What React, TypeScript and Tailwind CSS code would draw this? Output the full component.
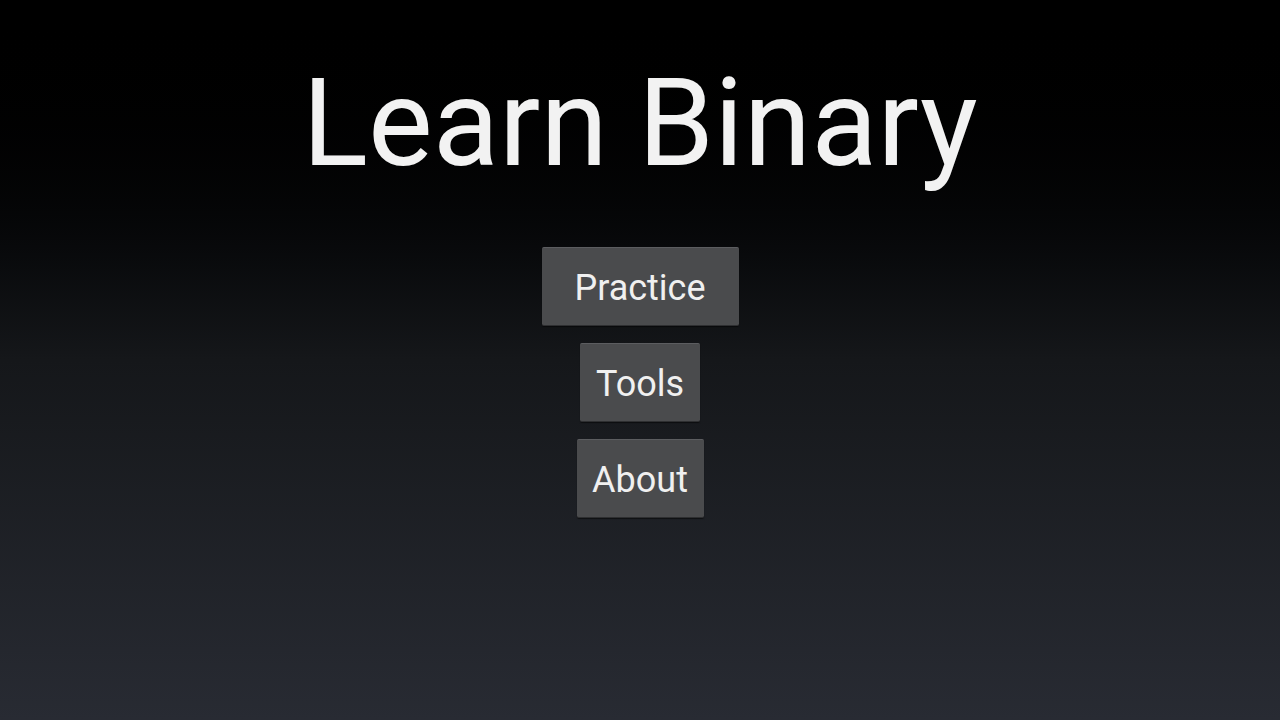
const MenuButton = ({ label, width }: { label: string; width: string }) => (
  <button
    className={`${width} h-[79px] pt-[3px] bg-[#4a4b4d] rounded-[2px] border-t border-t-[#5c5d60] border-b border-b-[#2e2f31] text-[36px] leading-none text-[#f0f0f0] shadow-[0_1px_1px_rgba(0,0,0,0.5)]`}
  >
    {label}
  </button>
);

export default function App() {
  return (
    <div
      className="w-full h-[720px] bg-gradient-to-b from-[#000000] via-[#15171a] to-[#282b33] flex flex-col items-center"
      style={{ fontFamily: 'Roboto, "Noto Sans", sans-serif' }}
    >
      <h1 className="mt-[49px] text-[122px] leading-[150px] text-[#f2f2f2] font-normal">
        Learn Binary
      </h1>
      <div className="mt-[48px] flex flex-col items-center gap-[17px]">
        <MenuButton label="Practice" width="w-[197px]" />
        <MenuButton label="Tools" width="w-[120px]" />
        <MenuButton label="About" width="w-[127px]" />
      </div>
    </div>
  );
}
